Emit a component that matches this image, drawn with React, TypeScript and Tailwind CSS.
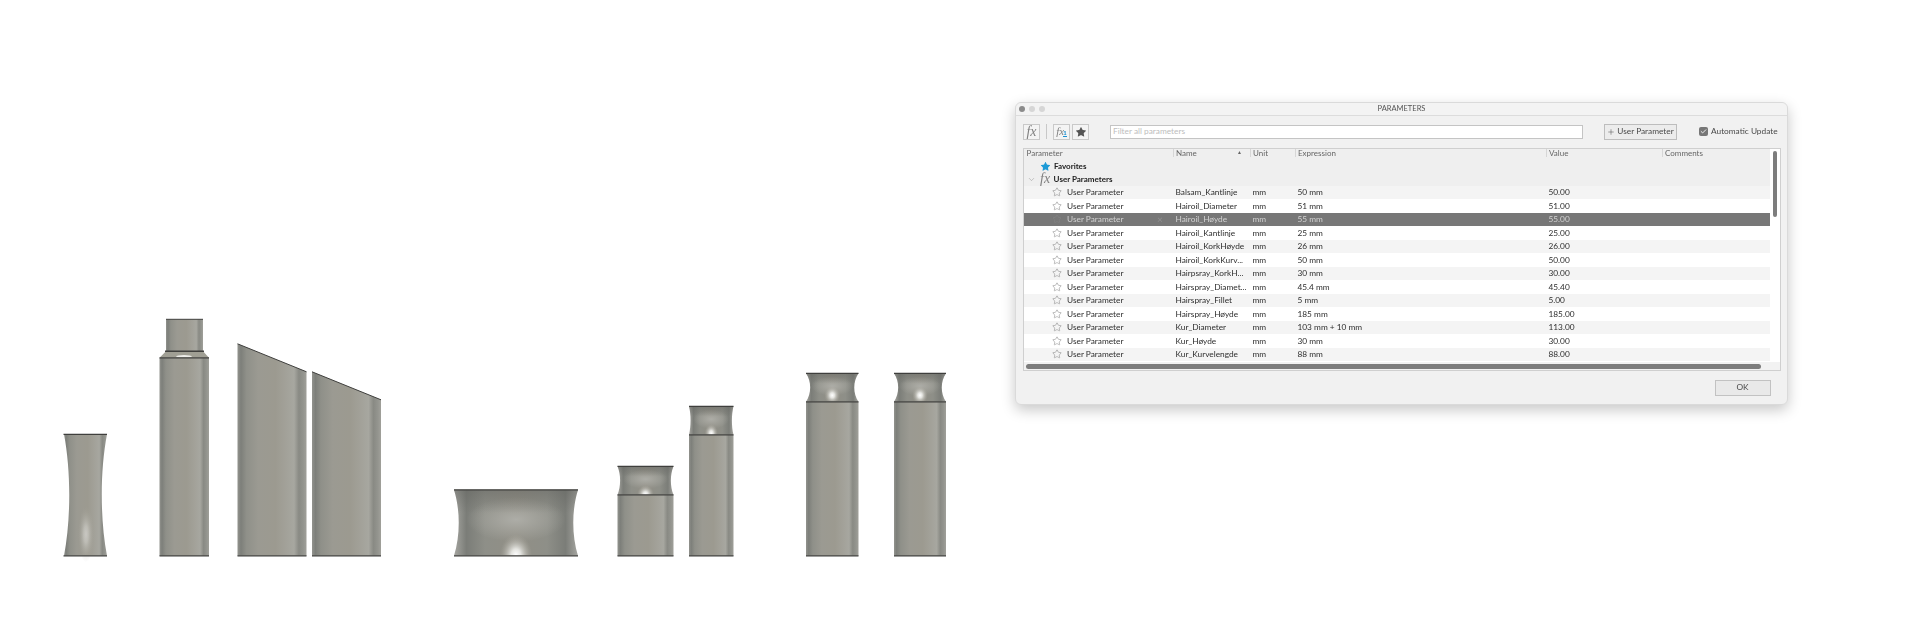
import { Star, Plus, ChevronDown, Check } from "lucide-react";
import { useId } from "react";

const font = "font-['Lato',sans-serif]";

const rows = [
  ["Balsam_Kantlinje", "50 mm", "50.00"],
  ["Hairoil_Diameter", "51 mm", "51.00"],
  ["Hairoil_Høyde", "55 mm", "55.00"],
  ["Hairoil_Kantlinje", "25 mm", "25.00"],
  ["Hairoil_KorkHøyde", "26 mm", "26.00"],
  ["Hairoil_KorkKurv...", "50 mm", "50.00"],
  ["Hairpsray_KorkH...", "30 mm", "30.00"],
  ["Hairspray_Diamet...", "45.4 mm", "45.40"],
  ["Hairspray_Fillet", "5 mm", "5.00"],
  ["Hairspray_Høyde", "185 mm", "185.00"],
  ["Kur_Diameter", "103 mm + 10 mm", "113.00"],
  ["Kur_Høyde", "30 mm", "30.00"],
  ["Kur_Kurvelengde", "88 mm", "88.00"],
];

// concave side profile, used for the caps and the small jars
const waist = (x0: number, x1: number, top: number, bot: number, inset: number) =>
  `M${x0} ${top} L${x1} ${top} C${x1 - inset * 1.4} ${top + (bot - top) * 0.3} ${x1 - inset * 1.4} ${top + (bot - top) * 0.7} ${x1} ${bot} L${x0} ${bot} C${x0 + inset * 1.4} ${top + (bot - top) * 0.7} ${x0 + inset * 1.4} ${top + (bot - top) * 0.3} ${x0} ${top}Z`;

const Line = ({ x0, x1, y, w = 1.2 }: { x0: number; x1: number; y: number; w?: number }) => (
  <line x1={x0} x2={x1} y1={y} y2={y} stroke="#3f3f3d" strokeWidth={w} />
);

const Cap = ({ x0, x1, top, bot, inset, spot, size = 0.3 }: { x0: number; x1: number; top: number; bot: number; inset: number; spot: number; size?: number }) => {
  const id = useId();
  const cx = (x0 + x1) / 2;
  const d = waist(x0, x1, top, bot, inset);
  return (
    <g>
      <clipPath id={id}>
        <path d={d} />
      </clipPath>
      <path d={d} fill="url(#cap)" />
      <g clipPath={`url(#${id})`}>
        <ellipse cx={cx} cy={top + (bot - top) * 0.45} rx={(x1 - x0) * 0.4} ry={(bot - top) * 0.34} fill="url(#haze)" />
        <rect x={x0} y={top} width={x1 - x0} height={(bot - top) * 0.35} fill="url(#shade)" />
        <ellipse cx={cx} cy={spot} rx={(x1 - x0) * size * 0.5} ry={(bot - top) * 0.32} fill="url(#spot)" />
      </g>
      <Line x0={x0} x1={x1} y={top} />
      <Line x0={x0} x1={x1} y={bot} />
    </g>
  );
};

const Tall = ({ x0, x1, top, seam, inset, spot }: { x0: number; x1: number; top: number; seam: number; inset: number; spot: number }) => (
  <g>
    <rect x={x0} y={seam} width={x1 - x0} height={556.5 - seam} fill="url(#body)" />
    <Cap x0={x0} x1={x1} top={top} bot={seam} inset={inset} spot={spot} />
    <Line x0={x0} x1={x1} y={556.5} />
  </g>
);

const Bottles = () => (
  <svg width="1015" height="626" viewBox="0 0.7 1015 626" className="flex-none">
    <defs>
      <linearGradient id="body" x1="0" x2="1" y1="0" y2="0">
        <stop offset="0" stopColor="#92938e" />
        <stop offset="0.05" stopColor="#7d7f7a" />
        <stop offset="0.13" stopColor="#8f9089" />
        <stop offset="0.3" stopColor="#9b9a92" />
        <stop offset="0.55" stopColor="#9c9a90" />
        <stop offset="0.72" stopColor="#a3a29a" />
        <stop offset="0.82" stopColor="#a7a7a0" />
        <stop offset="0.89" stopColor="#898a84" />
        <stop offset="0.95" stopColor="#93948e" />
        <stop offset="1" stopColor="#a0a09a" />
      </linearGradient>
      <linearGradient id="cap" x1="0" x2="1" y1="0" y2="0">
        <stop offset="0" stopColor="#a6a6a1" />
        <stop offset="0.1" stopColor="#7b7d78" />
        <stop offset="0.25" stopColor="#8e8f88" />
        <stop offset="0.5" stopColor="#918f86" />
        <stop offset="0.75" stopColor="#8e8f88" />
        <stop offset="0.9" stopColor="#7b7d78" />
        <stop offset="1" stopColor="#a6a6a1" />
      </linearGradient>
      <linearGradient id="shade" x1="0" x2="0" y1="0" y2="1">
        <stop offset="0" stopColor="#5f605c" stopOpacity="0.45" />
        <stop offset="1" stopColor="#5f605c" stopOpacity="0" />
      </linearGradient>
      <radialGradient id="spot">
        <stop offset="0" stopColor="#ffffff" />
        <stop offset="0.3" stopColor="#e4e4e0" />
        <stop offset="1" stopColor="#a8a69c" stopOpacity="0" />
      </radialGradient>
      <radialGradient id="haze">
        <stop offset="0" stopColor="#adada7" />
        <stop offset="1" stopColor="#adada7" stopOpacity="0" />
      </radialGradient>
    </defs>

    {/* vase */}
    <path d={waist(64, 107, 435, 556.5, 5)} fill="url(#body)" />
    <ellipse cx="86" cy="535" rx="8" ry="28" fill="url(#spot)" opacity="0.45" />
    <Line x0={63.5} x1={107} y={435} />
    <Line x0={63.5} x1={107} y={556.5} />

    {/* tall bottle with neck */}
    <rect x="166" y="320" width="37" height="32" fill="url(#body)" />
    <Line x0={166} x1={203} y={320} w={1} />
    <path d="M166 352 L203 352 L209 358.5 L159.5 358.5Z" fill="#a09f94" />
    <Line x0={165} x1={204} y={352} w={1.4} />
    <ellipse cx="184" cy="357" rx="8" ry="1.2" fill="#eeeeea" />
    <rect x="159.5" y="358.5" width="49.5" height="198" fill="url(#body)" />
    <Line x0={159.5} x1={209} y={358.5} />
    <Line x0={159.5} x1={209} y={556.5} />

    {/* slanted pair */}
    <path d="M237.5 344.5 L306.5 372.5 L306.5 556.5 L237.5 556.5Z" fill="url(#body)" />
    <line x1="237.5" y1="344.5" x2="306.5" y2="372.5" stroke="#3f3f3d" strokeWidth="1" />
    <Line x0={237.5} x1={306.5} y={556.5} />
    <path d="M312 372.5 L381 400.5 L381 556.5 L312 556.5Z" fill="url(#body)" />
    <line x1="312" y1="372.5" x2="381" y2="400.5" stroke="#3f3f3d" strokeWidth="1" />
    <Line x0={312} x1={381} y={556.5} />

    {/* wide jar */}
    <Cap x0={454} x1={578} top={490.5} bot={556.5} inset={4.5} spot={556} size={0.26} />

    <Tall x0={617.5} x1={673.5} top={467} seam={495.5} inset={2.5} spot={495} />
    <Tall x0={689} x1={733.5} top={407} seam={435.5} inset={1.5} spot={434} />
    <Tall x0={806} x1={858.5} top={374} seam={402.5} inset={4} spot={396} />
    <Tall x0={894} x1={946} top={374} seam={402.5} inset={4} spot={396} />
  </svg>
);

const Fx = ({ className }: { className: string }) => (
  <span className={`font-['Liberation_Serif',serif] italic leading-none ${className}`}>fx</span>
);

const ToolButton = ({ children }: { children: React.ReactNode }) => (
  <div className="flex h-4 w-[17px] items-center justify-center border border-[#c9c9c9] bg-[#f4f4f4]">{children}</div>
);

const HeaderCell = ({ label, className }: { label: string; className: string }) => (
  <div className={`${className} flex-none border-l border-[#d6d6d6] pl-[2px]`}>{label}</div>
);

const ParamRow = ({ row, index }: { row: string[]; index: number }) => {
  const selected = index === 2;
  const bg = selected ? "bg-[#777777] text-[#d2d2d2]" : index % 2 === 0 ? "bg-[#f4f4f4] text-[#2e2e2e]" : "bg-white text-[#2e2e2e]";
  return (
    <div className={`flex h-[13.5px] items-center text-[8.3px] leading-none ${bg}`}>
      <div className="flex w-[149px] flex-none items-center pl-[27.5px]">
        <Star size={10} strokeWidth={1} className={selected ? "flex-none text-[#8a8a8a]" : "flex-none text-[#666666]"} />
        <span className="ml-[5.5px] w-[90px] flex-none">User Parameter</span>
        {selected && <span className="text-[10px] text-[#8f8f8f]">×</span>}
      </div>
      <div className="w-[77px] flex-none pl-[2.5px]">{row[0]}</div>
      <div className="w-[45px] flex-none pl-[2.5px]">mm</div>
      <div className="w-[251px] flex-none pl-[2.5px]">{row[1]}</div>
      <div className="flex-none pl-[2.5px]">{row[2]}</div>
    </div>
  );
};

const ParametersDialog = () => (
  <div className={`${font} mt-[102px] flex h-[303px] w-[773px] flex-none flex-col rounded-[6px] border border-[#dadada] bg-[#f1f1f1] shadow-[0_5px_14px_rgba(0,0,0,0.22)] blur-[0.3px]`}>
    {/* title bar */}
    <div className="relative flex h-[12.5px] flex-none items-center justify-center rounded-t-[6px] border-b border-[#dcdcdc] bg-[#f3f3f3]">
      <div className="absolute left-[3px] top-[3px] flex gap-[4px]">
        <span className="h-[6px] w-[6px] rounded-full bg-[#8b8b8b]" />
        <span className="h-[6px] w-[6px] rounded-full bg-[#d6d6d6]" />
        <span className="h-[6px] w-[6px] rounded-full bg-[#d6d6d6]" />
      </div>
      <span className="text-[7.5px] leading-none text-[#555555]">PARAMETERS</span>
    </div>

    {/* toolbar */}
    <div className="flex h-[32px] flex-none items-center pl-[7px]">
      <ToolButton><Fx className="text-[14px] text-[#808080]" /></ToolButton>
      <div className="ml-[6px] h-[15px] w-px bg-[#c8c8c8]" />
      <div className="ml-[6px]">
        <ToolButton>
          <span className="flex items-end">
            <Fx className="text-[11px] text-[#808080]" />
            <span className="ml-[-1px] border-b border-[#1d8fd0] text-[6px] font-bold leading-[7px] text-[#1d8fd0]">1</span>
          </span>
        </ToolButton>
      </div>
      <div className="ml-[2px]">
        <ToolButton><Star size={12} fill="#555555" strokeWidth={0} /></ToolButton>
      </div>
      <div className="ml-[21px] flex h-[14px] w-[473px] items-center border border-[#c4c4c4] bg-white pl-[2px] text-[8.3px] text-[#bdbdbd]">
        Filter all parameters
      </div>
      <div className="ml-[21px] flex h-4 w-[73px] items-center justify-center gap-[2px] whitespace-nowrap border border-[#bdbdbd] bg-[#ececec] text-[8.3px] text-[#4a4a4a]">
        <Plus size={8} strokeWidth={1.5} className="flex-none" />
        User Parameter
      </div>
      <div className="ml-[22px] flex h-[9px] w-[9px] items-center justify-center rounded-[2px] bg-[#777777]">
        <Check size={7} strokeWidth={3} className="text-white" />
      </div>
      <span className="ml-[3px] whitespace-nowrap text-[8.3px] text-[#4a4a4a]">Automatic Update</span>
    </div>

    {/* table */}
    <div className="ml-[7px] flex h-[223.5px] w-[758px] flex-none flex-col border border-[#cfcfcf] bg-white">
      <div className="flex min-h-0 flex-1">
        <div className="w-[746px] flex-none">
          <div className="flex h-[11px] items-start bg-[#efefef] pt-[0.5px] text-[8px] leading-none text-[#666666]">
            <div className="w-[149px] flex-none pl-[2.5px]">Parameter</div>
            <div className="relative w-[77px] flex-none border-l border-[#d6d6d6] pl-[2px]">
              Name
              <span className="absolute right-[8px] top-[1px] text-[5px]">▲</span>
            </div>
            <HeaderCell label="Unit" className="w-[45px]" />
            <HeaderCell label="Expression" className="w-[251px]" />
            <HeaderCell label="Value" className="w-[116px]" />
            <HeaderCell label="Comments" className="w-[108px]" />
          </div>
          <div className="flex h-[13px] items-center bg-[#efefef] pl-[16px] text-[8px] font-bold leading-none text-[#222222]">
            <Star size={11} fill="#1d9ad6" strokeWidth={0} className="flex-none" />
            <span className="ml-[3px]">Favorites</span>
          </div>
          <div className="flex h-[13px] items-center bg-[#efefef] pl-[3px] text-[8px] font-bold leading-none text-[#222222]">
            <ChevronDown size={9} strokeWidth={1} className="flex-none text-[#777777]" />
            <Fx className="ml-[4px] text-[14px] font-normal text-[#808080]" />
            <span className="ml-[3.5px]">User Parameters</span>
          </div>
          {rows.map((row, index) => (
            <ParamRow key={row[0]} row={row} index={index} />
          ))}
        </div>
        <div className="ml-[3px] mt-[2px] h-[66px] w-[4px] flex-none rounded-full bg-[#7d7d7d]" />
      </div>
      <div className="flex h-[8px] flex-none items-center bg-[#f2f2f2] pl-[2px]">
        <div className="h-[5px] w-[735px] rounded-full bg-[#7d7d7d]" />
      </div>
    </div>

    {/* footer */}
    <div className="flex flex-1 items-center justify-end pr-[16.5px]">
      <div className="flex h-[16px] w-[56px] items-center justify-center border border-[#c2c2c2] bg-[#e9e9e9] text-[8.3px] text-[#4a4a4a]">
        OK
      </div>
    </div>
  </div>
);

export default function App() {
  return (
    <div className="flex h-screen w-full items-start overflow-hidden bg-white">
      <Bottles />
      <ParametersDialog />
    </div>
  );
}
